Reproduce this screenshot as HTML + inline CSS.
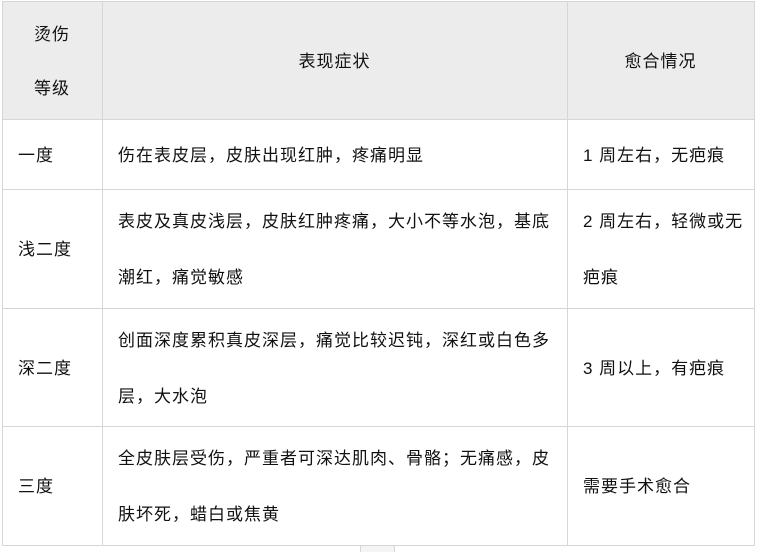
<!DOCTYPE html>
<html><head><meta charset="utf-8"><style>
html,body{margin:0;padding:0;background:#fff;width:757px;height:550px;overflow:hidden;font-family:"Liberation Sans","Noto Sans CJK SC",sans-serif;font-size:17px;letter-spacing:1px;color:#111;}
.c{position:absolute;display:flex;align-items:center;box-sizing:border-box;line-height:56px;padding-top:3px;}
.h{background:#ececec;justify-content:center;text-align:center;line-height:54px;}
.l{position:absolute;background:#d6d6d6;}
</style></head><body>
<div class="c h" style="left:2px;top:1px;width:100px;height:118px;">烫伤<br>等级</div>
<div class="c h" style="left:102px;top:1px;width:465px;height:118px;">表现症状</div>
<div class="c h" style="left:567px;top:1px;width:187px;height:118px;">愈合情况</div>

<div class="c" style="left:18px;top:119px;width:84px;height:70px;">一度</div>
<div class="c" style="left:118px;top:119px;width:440px;height:70px;">伤在表皮层，皮肤出现红肿，疼痛明显</div>
<div class="c" style="left:583px;top:119px;width:165px;height:70px;">1 周左右，无疤痕</div>

<div class="c" style="left:18px;top:189px;width:84px;height:119px;">浅二度</div>
<div class="c" style="left:118px;top:189px;width:440px;height:119px;">表皮及真皮浅层，皮肤红肿疼痛，大小不等水泡，基底潮红，痛觉敏感</div>
<div class="c" style="left:583px;top:189px;width:165px;height:119px;">2 周左右，轻微或无疤痕</div>

<div class="c" style="left:18px;top:308px;width:84px;height:118px;">深二度</div>
<div class="c" style="left:118px;top:308px;width:440px;height:118px;">创面深度累积真皮深层，痛觉比较迟钝，深红或白色多层，大水泡</div>
<div class="c" style="left:583px;top:308px;width:165px;height:118px;">3 周以上，有疤痕</div>

<div class="c" style="left:18px;top:426px;width:84px;height:119px;">三度</div>
<div class="c" style="left:118px;top:426px;width:440px;height:119px;">全皮肤层受伤，严重者可深达肌肉、骨骼；无痛感，皮肤坏死，蜡白或焦黄</div>
<div class="c" style="left:583px;top:426px;width:165px;height:119px;">需要手术愈合</div>

<div class="l" style="left:2px;top:1px;width:753px;height:1px"></div>
<div class="l" style="left:2px;top:119px;width:753px;height:1px"></div>
<div class="l" style="left:2px;top:189px;width:753px;height:1px"></div>
<div class="l" style="left:2px;top:308px;width:753px;height:1px"></div>
<div class="l" style="left:2px;top:426px;width:753px;height:1px"></div>
<div class="l" style="left:2px;top:545px;width:753px;height:1px"></div>
<div class="l" style="left:2px;top:1px;width:1px;height:545px"></div>
<div class="l" style="left:102px;top:1px;width:1px;height:545px"></div>
<div class="l" style="left:567px;top:1px;width:1px;height:545px"></div>
<div class="l" style="left:754px;top:1px;width:1px;height:545px"></div>
<div style="position:absolute;left:360px;top:546px;width:33px;height:6px;border-left:1px solid #d6d6d6;border-right:1px solid #d6d6d6;background:#f4f4f4"></div>
</body></html>
